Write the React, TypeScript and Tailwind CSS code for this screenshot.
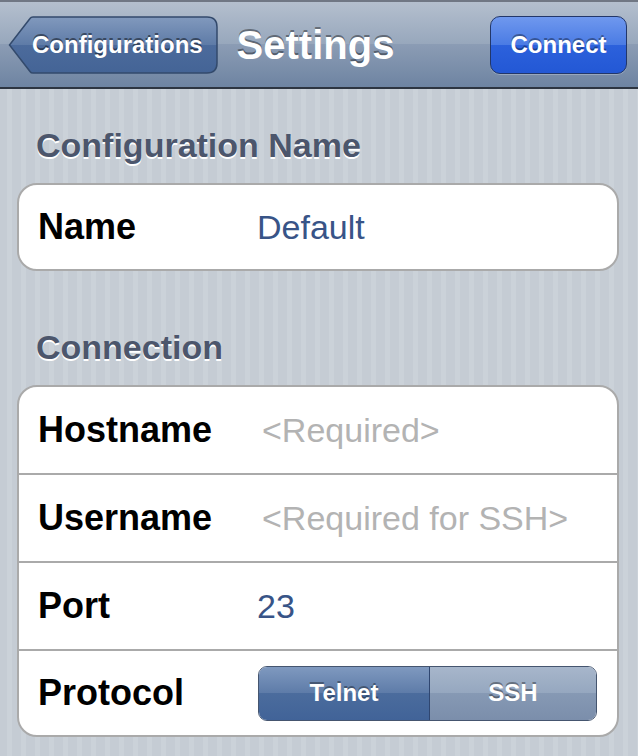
import React from 'react';

interface Row {
  label: string;
  value?: string;
  placeholder?: string;
}

const connectionRows: Row[] = [
  { label: 'Hostname', placeholder: '<Required>' },
  { label: 'Username', placeholder: '<Required for SSH>' },
  { label: 'Port', value: '23' },
];

const BackButton: React.FC<{ title: string }> = ({ title }) => (
  <button className="relative flex h-[58px] w-[210px] items-center pl-[24px] text-[24px] font-bold text-white [text-shadow:0_-2px_0_rgba(0,0,0,0.45)]">
    <svg className="absolute inset-0" width="210" height="58" viewBox="0 0 210 58">
      <defs>
        <linearGradient id="backFill" x1="0" y1="0" x2="0" y2="1">
          <stop offset="0" stopColor="#8199bd" />
          <stop offset="0.5" stopColor="#5e7ba7" />
          <stop offset="0.5" stopColor="#4c6b9c" />
          <stop offset="1" stopColor="#446496" />
        </linearGradient>
      </defs>
      <path
        d="M1.5 29 L22 2.5 Q23 1 25 1 L199 1 Q209 1 209 11 L209 47 Q209 57 199 57 L25 57 Q23 57 22 55.5 Z"
        fill="url(#backFill)"
        stroke="#334a6c"
        strokeWidth="1.5"
      />
    </svg>
    <span className="relative">{title}</span>
  </button>
);

const SectionHeader: React.FC<{ title: string }> = ({ title }) => (
  <h2 className="ml-[36px] mb-[18px] text-[34px] leading-[40px] font-bold text-[#4c566c] [text-shadow:0_2px_0_#ffffff]">
    {title}
  </h2>
);

const CellLabel: React.FC<{ text: string }> = ({ text }) => (
  <span className="w-[238px] shrink-0 pl-[19px] text-[36px] font-bold text-black">{text}</span>
);

const App: React.FC = () => {
  return (
    <div className="min-h-screen font-['Liberation_Sans',Arial,sans-serif] bg-[repeating-linear-gradient(90deg,#c5ccd4_0px,#c5ccd4_7px,#cbd2d9_7px,#cbd2d9_12px,#c5ccd4_12px,#c5ccd4_14px)] pb-[19px]">
      {/* navigation bar */}
      <header className="grid h-[89px] grid-cols-[1fr_auto_1fr] items-center border-t-2 border-b-2 border-t-[#707784] border-b-[#2d3541] bg-[linear-gradient(180deg,#b4bfce_0%,#97a7bc_50%,#8b9cb4_50%,#6e84a2_100%)] pl-[8px] pr-[11px]">
        <div className="flex">
          <BackButton title="Configurations" />
        </div>
        <h1 className="mr-[4px] text-[40px] font-bold text-white [text-shadow:0_-2px_0_rgba(0,0,0,0.4)]">Settings</h1>
        <div className="flex justify-end">
          <button className="h-[58px] w-[137px] rounded-[10px] border-[1.5px] border-[#22376a] bg-[linear-gradient(180deg,#6f98ee_0%,#4a7be4_50%,#2c61dc_50%,#2358d5_100%)] text-[24px] font-bold text-white shadow-[0_1px_0_rgba(255,255,255,0.25)] [text-shadow:0_-2px_0_rgba(0,0,0,0.35)]">
            Connect
          </button>
        </div>
      </header>

      <div className="pt-[36px]">
        <SectionHeader title="Configuration Name" />
        <div className="ml-[17px] mr-[19px] rounded-[20px] border-2 border-[#aaaaaa] bg-white">
          <div className="flex h-[84px] items-center">
            <CellLabel text="Name" />
            <span className="text-[34px] text-[#385487]">Default</span>
          </div>
        </div>
      </div>

      <div className="pt-[56px]">
        <SectionHeader title="Connection" />
        <div className="ml-[17px] mr-[19px] overflow-hidden rounded-[20px] border-2 border-[#aaaaaa] bg-white">
          {connectionRows.map((row) => (
            <div key={row.label} className="flex h-[88px] items-center border-b-2 border-[#aaaaaa]">
              <CellLabel text={row.label} />
              {row.value ? (
                <span className="text-[34px] text-[#385487]">{row.value}</span>
              ) : (
                <span className="pl-[5px] text-[34px] text-[#b3b3b3]">{row.placeholder}</span>
              )}
            </div>
          ))}
          <div className="flex h-[84px] items-center">
            <CellLabel text="Protocol" />
            <div className="ml-[1px] flex h-[55px] w-[339px] overflow-hidden rounded-[9px] border border-[#45556f] text-[24px] font-bold text-white [text-shadow:0_-2px_0_rgba(0,0,0,0.35)]">
              <div className="flex w-[171px] items-center justify-center border-r border-[#2f4670] bg-[linear-gradient(180deg,#7f99bf_0%,#5d7ba8_50%,#4b6c9d_50%,#416398_100%)]">
                Telnet
              </div>
              <div className="flex flex-1 items-center justify-center bg-[linear-gradient(180deg,#a7b6cb_0%,#95a7bf_50%,#8699b4_50%,#7b8eab_100%)]">
                SSH
              </div>
            </div>
          </div>
        </div>
      </div>
    </div>
  );
};

export default App;
